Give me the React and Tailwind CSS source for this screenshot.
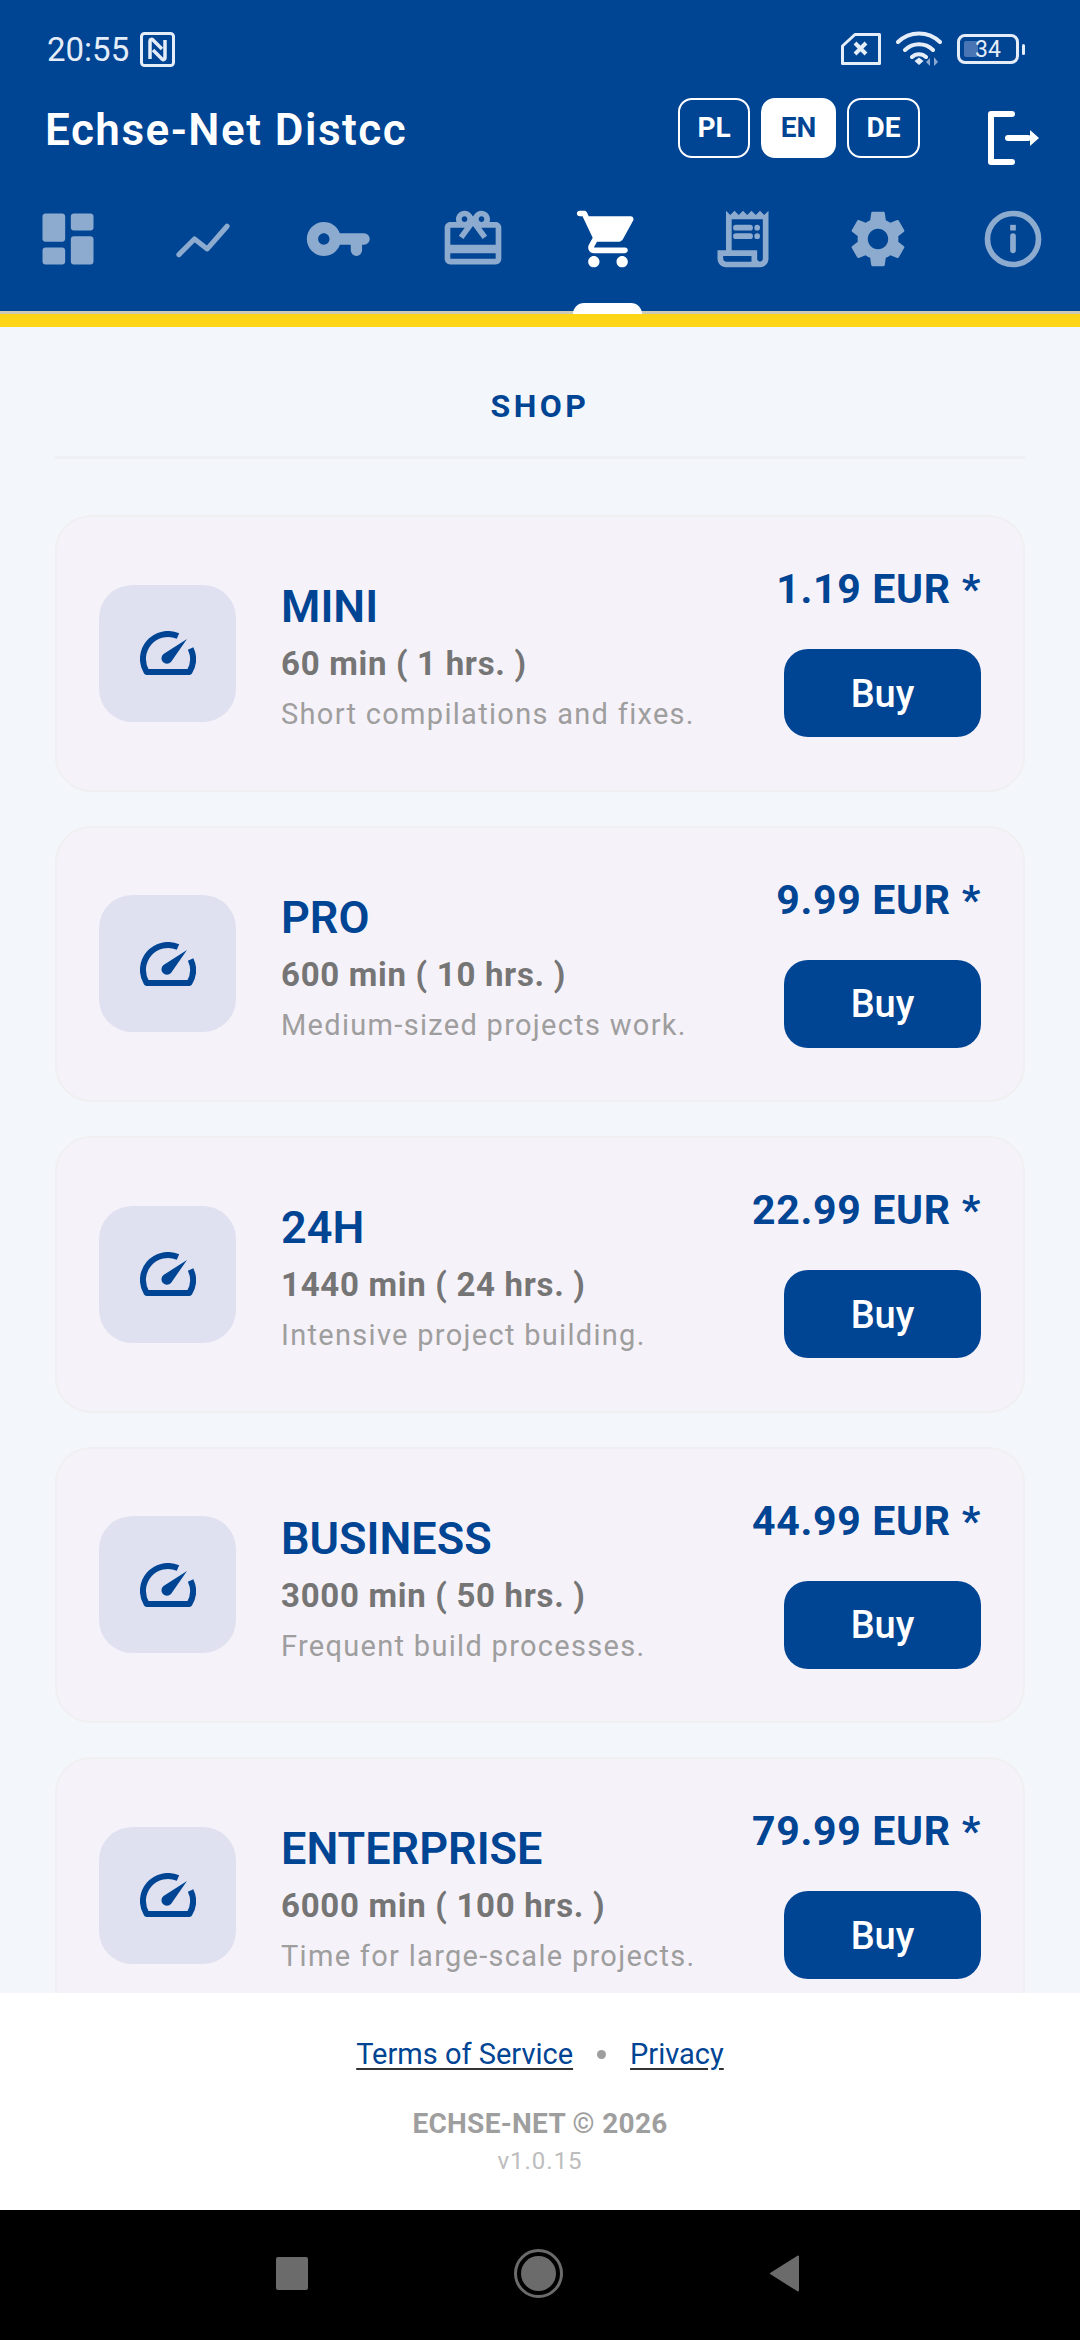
import React from "react";

const plans = [
  { name: "MINI", time: "60 min ( 1 hrs. )", desc: "Short compilations and fixes.", price: "1.19 EUR *" },
  { name: "PRO", time: "600 min ( 10 hrs. )", desc: "Medium-sized projects work.", price: "9.99 EUR *" },
  { name: "24H", time: "1440 min ( 24 hrs. )", desc: "Intensive project building.", price: "22.99 EUR *" },
  { name: "BUSINESS", time: "3000 min ( 50 hrs. )", desc: "Frequent build processes.", price: "44.99 EUR *" },
  { name: "ENTERPRISE", time: "6000 min ( 100 hrs. )", desc: "Time for large-scale projects.", price: "79.99 EUR *" },
];

const NavIcon = ({ active, children }) => (
  <div className={active ? "flex justify-center text-white" : "flex justify-center text-white/55"}>
    <svg width="68" height="68" viewBox="0 0 24 24" fill="currentColor">
      {children}
    </svg>
  </div>
);

const Gauge = () => (
  <svg width="56" height="44" viewBox="0 0 56 44" fill="none">
    <path d="M38 5.100A25 25 0 0 0 6.600 41H49.400A25 25 0 0 0 50.600 17.500" stroke="#004494" strokeWidth="6" strokeLinejoin="round" />
    <path d="M47 8L31 31a5.500 5.500 0 1 1-7.500-8Z" fill="#004494" />
  </svg>
);

const StatusBar = () => (
  <div className="flex h-[98px] items-center pl-[47px] pr-[55px] text-[#e4edf8]">
    <span className="text-[33px] leading-none">20:55</span>
    <svg className="ml-[11px]" width="35" height="35" viewBox="0 0 35 35" fill="none" stroke="currentColor">
      <rect x="1.500" y="1.500" width="32" height="32" rx="3" strokeWidth="3" />
      <path d="M10 27V9c0-2 2-2 3-1l9 9M25 8v18c0 2-2 2-3 1l-9-9" strokeWidth="3.500" />
    </svg>
    <div className="ml-auto flex items-center">
      <svg width="40" height="32" viewBox="0 0 40 32" fill="none" stroke="currentColor" strokeWidth="3">
        <path d="M14 1.500H38.500V30.500H1.500V13Z" strokeLinejoin="round" />
        <path d="M14 10L25 21M25 10L14 21" strokeWidth="4" />
      </svg>
      <svg className="ml-[15px]" width="46" height="36" viewBox="0 0 46 36">
        <path d="M2 11a30 30 0 0 1 42 0M9 19a20 20 0 0 1 28 0M16 26a10 10 0 0 1 14 0" fill="none" stroke="currentColor" strokeWidth="4" strokeLinecap="round" />
        <path d="M18.500 30L23 26.500L27.500 30L23 34Z" fill="currentColor" />
        <path d="M34 27v8l-4-4ZM38 35v-9l4 5Z" fill="#8aa8d0" />
      </svg>
      <div className="ml-[15px] flex items-center">
        <div className="relative flex h-[30px] w-[62px] items-center justify-center rounded-[8px] border-[3px] border-[#e4edf8]">
          <div className="absolute left-[4px] top-[4px] h-[16px] w-[14px] rounded-[2px] bg-[#4a75b5]" />
          <span className="relative text-[23px] leading-none">34</span>
        </div>
        <div className="ml-[3px] h-[11px] w-[3px] rounded-full bg-[#e4edf8]" />
      </div>
    </div>
  </div>
);

const LangButton = ({ label, active, width }) => (
  <button
    className={
      active
        ? "flex h-[60px] items-center justify-center rounded-[14px] border-2 border-white bg-white text-[28px] font-bold text-[#004494] " + width
        : "flex h-[60px] items-center justify-center rounded-[14px] border-2 border-white text-[28px] font-bold text-white " + width
    }
  >
    {label}
  </button>
);

const PlanCard = ({ plan }) => (
  <div className="flex h-[276.500px] shrink-0 items-center rounded-[36px] border-2 border-[#f0eff2] bg-[#f6f2f9] px-[42px]">
    <div className="flex h-[137px] w-[137px] shrink-0 items-center justify-center rounded-[33px] bg-[#dfe1f0]">
      <Gauge />
    </div>
    <div className="ml-[45px] flex-1 pt-[9px]">
      <div className="text-[45px] font-semibold leading-[52px] text-[#004494]">{plan.name}</div>
      <div className="mt-[11px] text-[33px] font-bold leading-[40px] tracking-[0.7px] text-[#757575]">{plan.time}</div>
      <div className="mt-[10px] text-[29px] leading-[40px] tracking-[1.3px] text-[#9e9e9e]">{plan.desc}</div>
    </div>
    <div className="flex flex-col items-end pb-[4px]">
      <div className="text-[41px] font-bold leading-[48px] tracking-[0.7px] text-[#004494]">{plan.price}</div>
      <button className="mt-[36px] flex h-[88px] w-[197px] items-center justify-center rounded-[24px] bg-[#004494] pt-[2px] text-[38px] font-medium text-white">
        Buy
      </button>
    </div>
  </div>
);

export default function App() {
  return (
    <div className="flex h-[2340px] w-[1080px] flex-col overflow-hidden bg-[#f3f6fa] font-['Roboto',sans-serif]">
      <header className="relative shrink-0">
        <div className="h-[311px] bg-[#004494]">
          <StatusBar />
          <div className="flex h-[107px] items-start pl-[45px] pr-[40px]">
            <h1 className="mt-[6px] text-[44px] font-semibold leading-[52px] tracking-[1.500px] text-white">Echse-Net Distcc</h1>
            <div className="ml-auto flex gap-[11px]">
              <LangButton label="PL" width="w-[72px]" />
              <LangButton label="EN" width="w-[75px]" active />
              <LangButton label="DE" width="w-[73px]" />
            </div>
            <svg className="ml-[68px] mt-[13px]" width="52" height="54" viewBox="0 0 52 54" fill="none" stroke="white" strokeWidth="6" strokeLinecap="round" strokeLinejoin="round">
              <path d="M24 3H3V51H24" />
              <path d="M20 27H40" />
              <path d="M42 19L51 27L42 35Z" fill="white" strokeWidth="0" />
            </svg>
          </div>
          <nav className="grid grid-cols-8">
            <NavIcon>
              <path d="M4 13h6c.55 0 1-.45 1-1V4c0-.55-.45-1-1-1H4c-.55 0-1 .45-1 1v8c0 .55.45 1 1 1zm0 8h6c.55 0 1-.45 1-1v-4c0-.55-.45-1-1-1H4c-.55 0-1 .45-1 1v4c0 .55.45 1 1 1zm10 0h6c.55 0 1-.45 1-1v-8c0-.55-.45-1-1-1h-6c-.55 0-1 .45-1 1v8c0 .55.45 1 1 1zM13 4v4c0 .55.45 1 1 1h6c.55 0 1-.45 1-1V4c0-.55-.45-1-1-1h-6c-.55 0-1 .45-1 1z" />
            </NavIcon>
            <NavIcon>
              <path d="M3.500 17.500l5.500-5.500 4.500 3.500L20.500 7.500" fill="none" stroke="currentColor" strokeWidth="1.800" strokeLinecap="round" strokeLinejoin="round" />
            </NavIcon>
            <NavIcon>
              <path fillRule="evenodd" d="M12.650 10C11.830 7.670 9.610 6 7 6c-3.310 0-6 2.690-6 6s2.690 6 6 6c2.610 0 4.830-1.670 5.650-4H16.500v2a2 2 0 0 0 4 0v-2h.7a2 2 0 0 0 0-4H12.650zM7 14c-1.100 0-2-.9-2-2s.9-2 2-2 2 .9 2 2-.9 2-2 2z" />
            </NavIcon>
            <NavIcon>
              <path d="M20 6h-2.180c.11-.31.18-.65.18-1 0-1.660-1.340-3-3-3-1.050 0-1.960.54-2.500 1.350l-.5.67-.5-.68C10.960 2.540 10.050 2 9 2 7.340 2 6 3.340 6 5c0 .35.07.69.18 1H4c-1.110 0-1.990.89-1.990 2L2 19c0 1.110.89 2 2 2h16c1.110 0 2-.89 2-2V8c0-1.110-.89-2-2-2zm-5-2c.55 0 1 .45 1 1s-.45 1-1 1-1-.45-1-1 .45-1 1-1zM9 4c.55 0 1 .45 1 1s-.45 1-1 1-1-.45-1-1 .45-1 1-1zm11 15H4v-2h16v2zm0-5H4V8h5.080L7 10.830 8.620 12 12 7.400l3.380 4.600L17 10.830 14.920 8H20v6z" />
            </NavIcon>
            <NavIcon active>
              <path d="M7 18c-1.100 0-1.990.9-1.990 2S5.900 22 7 22s2-.9 2-2-.9-2-2-2zM1 3c0 .55.45 1 1 1h1l3.600 7.590-1.350 2.440C4.520 15.370 5.480 17 7 17h11c.55 0 1-.45 1-1s-.45-1-1-1H7l1.100-2h7.450c.75 0 1.410-.41 1.750-1.030l3.580-6.490c.37-.66-.11-1.480-.87-1.480H5.210l-.67-1.430c-.16-.35-.52-.57-.9-.57H2c-.55 0-1 .45-1 1zm16 15c-1.100 0-1.990.9-1.990 2s.89 2 1.990 2 2-.9 2-2-.9-2-2-2z" />
            </NavIcon>
            <NavIcon>
              <path d="M19.500 3.500 18 2l-1.500 1.500L15 2l-1.500 1.500L12 2l-1.500 1.500L9 2 7.500 3.500 6 2v14H3v3c0 1.660 1.340 3 3 3h12c1.660 0 3-1.340 3-3V2l-1.500 1.500zM15 20H6c-.55 0-1-.45-1-1v-1h10v2zm4-1c0 .55-.45 1-1 1s-1-.45-1-1v-3H8V5h11v14z" />
              <path d="M9.500 7h5a1 1 0 0 1 0 2h-5a1 1 0 0 1 0-2zM9.500 10h5a1 1 0 0 1 0 2h-5a1 1 0 0 1 0-2z" />
              <circle cx="17" cy="8" r="1" />
              <circle cx="17" cy="11" r="1" />
            </NavIcon>
            <NavIcon>
              <path d="M19.140 12.940c.04-.3.06-.61.06-.94 0-.32-.02-.64-.07-.94l2.030-1.580c.18-.14.23-.41.12-.61l-1.920-3.320c-.12-.22-.37-.29-.59-.22l-2.390.96c-.5-.38-1.030-.7-1.620-.94l-.36-2.540c-.04-.24-.24-.41-.48-.41h-3.840c-.24 0-.43.17-.47.41l-.36 2.540c-.59.24-1.130.57-1.620.94l-2.390-.96c-.22-.08-.47 0-.59.22L2.740 8.870c-.12.21-.08.47.12.61l2.030 1.580c-.05.3-.09.63-.09.94s.02.64.07.94l-2.030 1.580c-.18.14-.23.41-.12.61l1.920 3.320c.12.22.37.29.59.22l2.390-.96c.5.38 1.030.7 1.620.94l.36 2.540c.05.24.24.41.48.41h3.840c.24 0 .44-.17.47-.41l.36-2.540c.59-.24 1.130-.56 1.620-.94l2.390.96c.22.08.47 0 .59-.22l1.920-3.320c.12-.22.07-.47-.12-.61l-2.010-1.580zM12 15.600c-1.980 0-3.600-1.620-3.600-3.600s1.620-3.600 3.600-3.600 3.600 1.620 3.600 3.600-1.620 3.600-3.600 3.600z" />
            </NavIcon>
            <NavIcon>
              <circle cx="12" cy="12" r="9" fill="none" stroke="currentColor" strokeWidth="2" />
              <rect x="11" y="7" width="2" height="2" />
              <path d="M12 11v5" stroke="currentColor" strokeWidth="2" strokeLinecap="round" />
            </NavIcon>
          </nav>
        </div>
        <div className="h-[3px] bg-[#cbcbb8]" />
        <div className="h-[13px] bg-[#ffd617]" />
        <div className="absolute left-[573px] top-[303px] h-[11px] w-[69px] rounded-t-[12px] bg-white" />
      </header>

      <main className="flex min-h-0 flex-1 flex-col overflow-hidden px-[55px] pt-[61px]">
        <h2 className="border-b-[3px] border-[#eef0f3] pb-[32px] text-center text-[32px] font-bold leading-[36px] tracking-[3.500px] text-[#004494]">SHOP</h2>
        <div className="mt-[56px] flex flex-col gap-[34px]">
          {plans.map((plan) => (
            <PlanCard key={plan.name} plan={plan} />
          ))}
        </div>
      </main>

      <footer className="flex h-[217px] shrink-0 flex-col items-center bg-white pt-[43px]">
        <div className="flex items-center text-[29px] leading-[36px] text-[#004494]">
          <a className="underline decoration-[#333] underline-offset-[4px]">Terms of Service</a>
          <span className="mx-[24px] h-[9px] w-[9px] rounded-full bg-[#9e9e9e]" />
          <a className="underline decoration-[#333] underline-offset-[4px]">Privacy</a>
        </div>
        <div className="mt-[35px] text-[28px] font-bold leading-[34px] tracking-[0.3px] text-[#9e9e9e]">ECHSE-NET © 2026</div>
        <div className="mt-[5px] text-[24px] leading-[30px] tracking-[1px] text-[#bdbdbd]">v1.0.15</div>
      </footer>

      <div className="flex h-[130px] shrink-0 items-center justify-between bg-black pb-[4px] pl-[276px] pr-[280px]">
        <div className="h-[33px] w-[32px] rounded-[2px] bg-[#6b6b6b]" />
        <div className="flex h-[49px] w-[49px] items-center justify-center rounded-full border-[3px] border-[#6b6b6b]">
          <div className="h-[35px] w-[35px] rounded-full bg-[#6b6b6b]" />
        </div>
        <svg width="31" height="37" viewBox="0 0 31 37">
          <path d="M29 1.500V35.500L2 18.500Z" fill="#6b6b6b" stroke="#6b6b6b" strokeWidth="2" strokeLinejoin="round" />
        </svg>
      </div>
    </div>
  );
}
